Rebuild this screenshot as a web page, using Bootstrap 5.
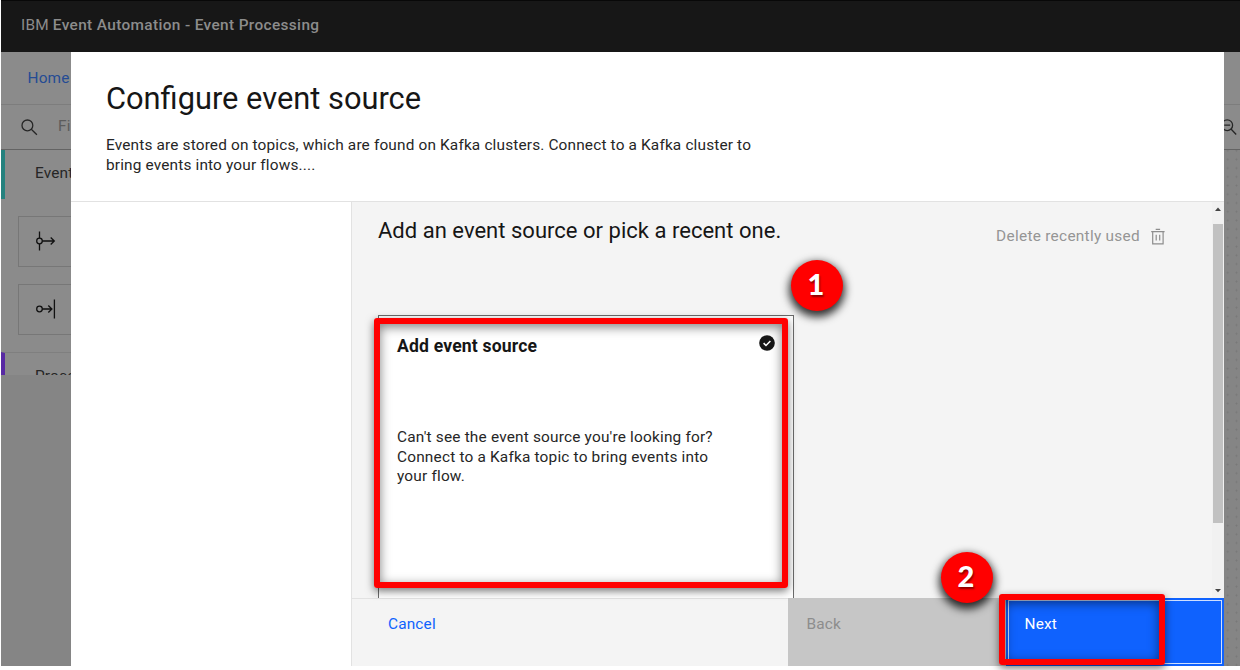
<!DOCTYPE html>
<html lang="en">
<head>
<meta charset="utf-8">
<meta name="viewport" content="width=device-width, initial-scale=1">
<title>IBM Event Automation - Event Processing</title>
<link href="https://cdn.jsdelivr.net/npm/bootstrap@5.3.0/dist/css/bootstrap.min.css" rel="stylesheet">
<style>
body{font-family:Roboto,"Liberation Sans",sans-serif;font-size:15.4px;line-height:19.8px;color:#161616;background:#fff;letter-spacing:.16px;overflow:hidden}
.shell{height:666px;margin-left:1px}
.topbar{height:52px;background:#171717;border-top:1px solid #080808;color:#8c8c8c;padding:0 0 1px 20px;letter-spacing:.19px}
.topbar b{font-weight:500;letter-spacing:.36px}
.dimmed{background:#858585}
.crumbs{height:53px;background:#8b8b8b;border-bottom:1px solid #7d7d7d;padding:1px 0 0 26.5px}
.crumbs a{color:#254b94}
.tools{height:45px;background:#8b8b8b;border-bottom:1px solid #636363}
.palette{width:180px;height:225px;background:#8b8b8b;overflow:hidden;color:#262626}
.group-head{height:49px;padding:0 0 2px 30px;border-left:4px solid #25817e}
.group-head.processors{border-color:#5829a3;border-top:1px solid #7f7f7f;height:50px}
.node-tile{height:51px;margin-left:17px;border:1px solid #777;padding:0 0 1px 15px}
.dots{background-image:radial-gradient(circle,#787878 0 .8px,transparent 1.2px);background-size:8.72px 8.72px;background-position:-.6px 5px}
.dialog-panel{left:70px;right:16px;top:52px;bottom:0;background:#fff}
.dialog-top{height:150px;border-bottom:1px solid #e2e2e2;padding:28px 35px 0}
.dialog-top h1{font-size:30.8px;line-height:38px;font-weight:400;margin:0 0 18px;letter-spacing:0}
.intro{width:665px;color:#262626}
.steps{width:281px;border-right:1px solid #e2e2e2}
.work{background:#f4f4f4;min-width:0}
.scroller{height:396px;overflow:hidden}
.scroller h2{font-size:22px;line-height:28px;font-weight:400;margin:0;letter-spacing:.02px}
.top-line{padding:15px 46px 0 26px}
.muted-action{color:#959595;margin-top:10px;letter-spacing:.28px}
.tile{width:416px;height:330px;margin:68px 0 0 26px;border:1px solid #6b6b6b;background:#fff;padding:19px 18px 0 18px}
.tile h3{font-size:17.6px;line-height:23px;font-weight:700;margin:0}
.tile p{margin:70px 40px 0 0;color:#262626;letter-spacing:.19px}
.track{width:12px;background:#f1f1f1}
.thumb{width:10px;height:299px;background:#c1c1c1}
.foot{height:68px}
.foot>*{padding:17px 19px;height:68px}
.cancel-cell{width:435.5px;color:#0f62fe;border-top:1px solid #e2e2e2;padding:16px 36px!important}
.back-cell{width:218px;background:#c6c6c6;color:#8d8d8d}
.next-cell{background:#0f62fe;color:#fff;border:2px solid #0f62fe;box-shadow:inset 0 0 0 1px #cfdfff;padding:15px 17px!important}
.callout{border:6px solid red;border-radius:3px;box-shadow:0 3px 9px rgba(0,0,0,.55),inset 0 3px 11px rgba(0,0,0,.5)}
.pin{width:52px;height:51px;border-radius:50%;background:red;color:#fff;font:900 29px/47px Lato,sans-serif;padding-right:2px;text-align:center;box-shadow:0 4px 9px 2px rgba(0,0,0,.8);text-shadow:1px 2px 2px rgba(0,0,0,.45)}
.c1{left:374px;top:318px;width:414px;height:270px}
.c2{left:999px;top:594px;width:166px;height:71px}
.p1{left:791px;top:260px}
.p2{left:941px;top:552px}
</style>
</head>
<body>
<div class="shell position-relative d-flex flex-column">
  <header class="topbar d-flex align-items-center"><span>IBM <b>Event Automation - Event Processing</b></span></header>
  <div class="dimmed flex-grow-1 d-flex flex-column">
    <nav class="crumbs d-flex align-items-center"><a class="text-decoration-none" href="#">Home</a></nav>
    <div class="tools d-flex align-items-center justify-content-between">
      <div class="d-flex align-items-center" style="color:#5c5c5c">
        <svg class="ms-3" width="24" height="18" viewBox="0 0 24 18" fill="none" stroke="#262626" stroke-width="1.3"><circle cx="10.4" cy="7.4" r="5.4"/><path d="M14.3 11.3l5.6 5.5"/></svg>
        <span style="margin-left:17px">Filter</span>
      </div>
      <svg style="margin-right:3px" width="18" height="18" viewBox="0 0 18 18" fill="none" stroke="#262626" stroke-width="1.3"><circle cx="8.2" cy="7.2" r="5.4"/><path d="M12 11l5.2 5.5M5.2 7.2h6"/></svg>
    </div>
    <div class="d-flex flex-grow-1">
      <aside class="palette">
        <div class="group-head d-flex align-items-center">Events</div>
        <div class="node-tile d-flex align-items-center" style="margin-top:17px">
          <svg width="24" height="22" viewBox="0 0 24 22" fill="none" stroke="#111" stroke-width="1.3"><circle cx="5.5" cy="11" r="2.8"/><path d="M5.5 1.5v6.7M5.5 13.8v6.7M8.3 11h12M16.7 7.5l3.6 3.5-3.6 3.5"/></svg>
        </div>
        <div class="node-tile d-flex align-items-center" style="margin-top:17px">
          <svg width="24" height="22" viewBox="0 0 24 22" fill="none" stroke="#111" stroke-width="1.3"><circle cx="5.5" cy="11" r="2.8"/><path d="M8.3 11h9.5M14.3 7.5l3.6 3.5-3.6 3.5M20.4 1.5v19"/></svg>
        </div>
        <div class="group-head processors d-flex align-items-center" style="margin-top:17px">Processors</div>
      </aside>
      <div class="flex-grow-1 d-flex justify-content-end"><div class="dots" style="width:16px"></div></div>
    </div>
  </div>

  <section class="dialog-panel position-absolute d-flex flex-column" role="dialog">
    <div class="dialog-top">
      <h1>Configure event source</h1>
      <div class="intro">Events are stored on topics, which are found on Kafka clusters. Connect to a Kafka cluster to<br>bring events into your flows....</div>
    </div>
    <div class="d-flex flex-grow-1">
      <div class="steps flex-shrink-0"></div>
      <div class="work flex-grow-1">
        <div class="scroller d-flex">
          <div class="flex-grow-1">
            <div class="top-line d-flex justify-content-between align-items-start">
              <h2>Add an event source or pick a recent one.</h2>
              <div class="muted-action d-flex align-items-center"><span>Delete recently used</span>
                <svg style="margin-left:10px" width="16" height="18" viewBox="0 0 16 18" fill="none" stroke="#8d8d8d" stroke-width="1.2"><path d="M1.2 3.6h13.4M5.7 1.3h4.4M2.7 3.6v12.3h10.4V3.6M6.2 6.8v5.8M9.7 6.8v5.8"/></svg>
              </div>
            </div>
            <div class="tile">
              <div class="d-flex justify-content-between"><h3>Add event source</h3>
                <svg width="16" height="16" viewBox="0 0 16 16"><circle cx="8" cy="8" r="7.8" fill="#161616"/><path d="M4.6 8.1l2.4 2.4 4.4-4.5" fill="none" stroke="#fff" stroke-width="1.5"/></svg>
              </div>
              <p>Can't see the event source you're looking for?<br>Connect to a Kafka topic to bring events into<br>your flow.</p>
            </div>
          </div>
          <div class="track d-flex flex-column align-items-center justify-content-between">
            <svg width="8" height="22" viewBox="0 0 8 22"><path d="M1 9l3-3.5L7 9z" fill="#444"/></svg>
            <div class="thumb"></div>
            <svg class="mt-auto" width="8" height="12" viewBox="0 0 8 12"><path d="M1 3h6L4 6.3z" fill="#444"/></svg>
          </div>
        </div>
        <div class="foot d-flex">
          <div class="cancel-cell">Cancel</div>
          <div class="back-cell">Back</div>
          <div class="next-cell flex-grow-1">Next</div>
        </div>
      </div>
    </div>
  </section>
</div>
<div class="callout c1 position-absolute"></div>
<div class="callout c2 position-absolute"></div>
<div class="pin p1 position-absolute">1</div>
<div class="pin p2 position-absolute">2</div>
<script src="https://cdn.jsdelivr.net/npm/bootstrap@5.3.0/dist/js/bootstrap.bundle.min.js"></script>
</body>
</html>
